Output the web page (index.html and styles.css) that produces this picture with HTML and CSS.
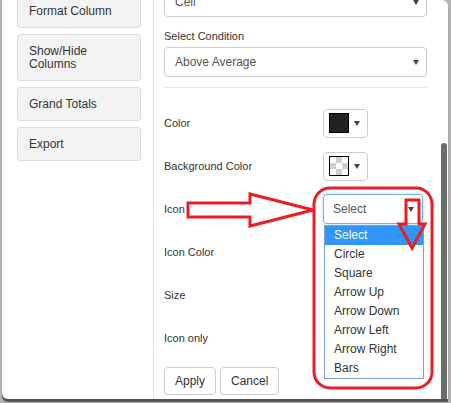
FILE: index.html
```html
<!DOCTYPE html>
<html>
<head>
<meta charset="utf-8">
<link rel="stylesheet" href="styles.css">
</head>
<body>
<div class="modal">
  <div class="scroller">
    <aside class="sidebar">
      <div class="side-btn">Format Column</div>
      <div class="side-btn">Show/Hide<br>Columns</div>
      <div class="side-btn">Grand Totals</div>
      <div class="side-btn">Export</div>
    </aside>
    <main class="content">
      <div class="select">Cell<span class="caret"></span></div>
      <div class="field-label">Select Condition</div>
      <div class="select select-gap">Above Average<span class="caret"></span></div>
      <div class="rule"></div>
      <div class="form-grid">
        <div class="row-label">Color</div>
        <div class="control"><div class="picker"><span class="swatch swatch-dark"></span><span class="caret"></span></div></div>
        <div class="row-label">Background Color</div>
        <div class="control"><div class="picker"><span class="swatch swatch-checker"></span><span class="caret"></span></div></div>
        <div class="row-label">Icon</div>
        <div class="control">
          <div class="select icon-select">Select<span class="caret"></span>
            <ul class="dropdown">
              <li class="active">Select</li>
              <li>Circle</li>
              <li>Square</li>
              <li>Arrow Up</li>
              <li>Arrow Down</li>
              <li>Arrow Left</li>
              <li>Arrow Right</li>
              <li>Bars</li>
            </ul>
          </div>
        </div>
        <div class="row-label">Icon Color</div>
        <div class="control"></div>
        <div class="row-label">Size</div>
        <div class="control"></div>
        <div class="row-label">Icon only</div>
        <div class="control"></div>
      </div>
      <div class="actions">
        <button class="btn">Apply</button>
        <button class="btn">Cancel</button>
      </div>
    </main>
  </div>
  <div class="scrollbar"><div class="thumb"></div></div>
</div>
<svg class="annot" width="451" height="403" viewBox="0 0 451 403">
  <polygon points="188,203 250,203 250,194 313,210 250,226 250,217 188,217" fill="none" stroke="#ed1c24" stroke-width="3" stroke-linejoin="miter"/>
  <rect x="314" y="188" width="118" height="200" rx="16" ry="16" fill="none" stroke="#ed1c24" stroke-width="3"/>
  <polygon points="406,200 419,200 419,224 425,224 412,248 399,224 406,224" fill="none" stroke="#ed1c24" stroke-width="3" stroke-linejoin="miter"/>
</svg>
</body>
</html>
```
FILE: styles.css
```css
* { box-sizing: border-box; }
html, body { margin: 0; padding: 0; }
body {
  width: 451px;
  height: 403px;
  background: #b4b4b4;
  font-family: "Liberation Sans", Arial, sans-serif;
  color: #333;
  overflow: hidden;
  position: relative;
}
.modal {
  margin-left: 2px;
  width: 446px;
  height: 399px;
  background: #fff;
  border-radius: 0 6px 0 6px;
  box-shadow: 0 3px 1px #555;
  display: flex;
  overflow: hidden;
}
.scroller {
  display: flex;
  margin-top: -13px;
  align-items: stretch;
}
.sidebar {
  width: 152px;
  padding: 7px 12px 0 15px;
  border-right: 1px solid #e6e6e6;
  height: 430px;
}
.side-btn {
  width: 124px;
  background: #f3f3f3;
  border: 1px solid #dcdcdc;
  border-radius: 3px;
  padding: 10px 11px 9px;
  font-size: 12px;
  line-height: 13px;
  margin-bottom: 6px;
  color: #333;
}
.content {
  width: 287px;
  padding: 0 14px 0 10px;
}
.select {
  position: relative;
  height: 30px;
  border: 1px solid #ccc;
  border-radius: 4px;
  padding: 0 10px;
  font-size: 12px;
  line-height: 28px;
  color: #555;
}
.caret {
  display: inline-block;
  width: 0;
  height: 0;
  border-left: 3px solid transparent;
  border-right: 3px solid transparent;
  border-top: 5px solid #444;
}
.select .caret {
  position: absolute;
  right: 7px;
  top: 12px;
}
.field-label {
  margin-top: 13px;
  font-size: 11px;
  line-height: 13px;
  color: #333;
}
.select-gap { margin-top: 4px; }
.rule {
  margin-top: 10px;
  border-top: 1px solid #e8e8e8;
}
.form-grid {
  margin-top: 20px;
  display: grid;
  grid-template-columns: 159px 104px;
  grid-auto-rows: 30px;
  row-gap: 13px;
}
.row-label {
  font-size: 11px;
  display: flex;
  align-items: center;
  color: #333;
}
.control { display: flex; align-items: center; }
.picker {
  width: 45px;
  height: 29px;
  border: 1px solid #ccc;
  border-radius: 4px;
  display: flex;
  align-items: center;
  padding-left: 5px;
  gap: 5px;
}
.swatch {
  width: 20px;
  height: 20px;
  border: 1px solid #000;
}
.swatch-dark { background: #222; }
.swatch-checker {
  background-color: #fff;
  background-image: conic-gradient(#cfcfcf 25%, #fff 0 50%, #cfcfcf 0 75%, #fff 0);
  background-size: 12px 12px;
}
.icon-select {
  width: 100px;
  border-color: #74b3ea;
  box-shadow: 0 0 3px rgba(102, 175, 233, 0.6);
  padding-left: 9px;
}
.icon-select .caret { right: 8px; }
.dropdown {
  position: absolute;
  top: 30px;
  left: 0;
  width: 100px;
  margin: 0;
  padding: 0;
  list-style: none;
  background: #fff;
  border: 1px solid #7a9ed6;
}
.dropdown li {
  height: 19px;
  line-height: 19px;
  padding-left: 9px;
  font-size: 12px;
  color: #333;
}
.dropdown li.active {
  background: #3096fa;
  color: #fff;
}
.actions {
  margin-top: 14px;
  display: flex;
  gap: 4px;
}
.btn {
  height: 28px;
  padding: 0 10px;
  border: 1px solid #ccc;
  border-radius: 4px;
  background: #fff;
  font-family: "Liberation Sans", Arial, sans-serif;
  font-size: 12px;
  color: #333;
}
.scrollbar {
  width: 7px;
  padding-right: 1px;
}
.thumb {
  margin-top: 143px;
  height: 270px;
  background: #6d6d6d;
  border-radius: 3px;
}
.annot {
  position: absolute;
  left: 0;
  top: 0;
  pointer-events: none;
}
```
